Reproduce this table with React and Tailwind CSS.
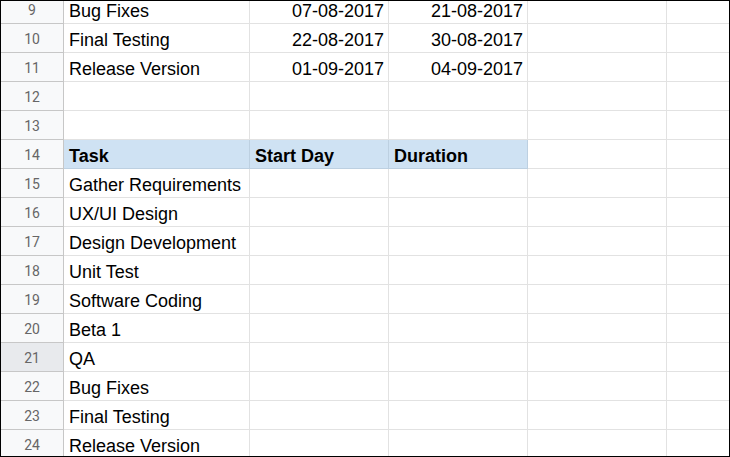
const rows = [
  { n: 9, a: 'Bug Fixes', b: '07-08-2017', c: '21-08-2017' },
  { n: 10, a: 'Final Testing', b: '22-08-2017', c: '30-08-2017' },
  { n: 11, a: 'Release Version', b: '01-09-2017', c: '04-09-2017' },
  { n: 12 },
  { n: 13 },
  { n: 14, a: 'Task', b: 'Start Day', c: 'Duration', head: true },
  { n: 15, a: 'Gather Requirements' },
  { n: 16, a: 'UX/UI Design' },
  { n: 17, a: 'Design Development' },
  { n: 18, a: 'Unit Test' },
  { n: 19, a: 'Software Coding' },
  { n: 20, a: 'Beta 1' },
  { n: 21, a: 'QA', selected: true },
  { n: 22, a: 'Bug Fixes' },
  { n: 23, a: 'Final Testing' },
  { n: 24, a: 'Release Version' },
];

function Row({ row }) {
  const cell = row.head
    ? 'bg-[#cfe2f3] border-r border-b border-[#bdd0e1] font-bold'
    : 'border-r border-b border-[#e2e2e2]';
  return (
    <div className="flex h-[29px]">
      <div
        className={`w-[63px] shrink-0 flex items-center justify-center pt-[1px] border-r border-b border-[#c7c7c7] text-[14px] text-[#666] font-['Roboto',sans-serif] ${
          row.selected ? 'bg-[#e8eaed]' : 'bg-[#f8f9fa]'
        }`}
      >
        {row.n}
      </div>
      <div className={`w-[186px] shrink-0 flex items-end pb-[1px] pl-[5px] whitespace-nowrap overflow-hidden ${cell}`}>
        {row.a}
      </div>
      <div className={`w-[139px] shrink-0 flex items-end pb-[1px] whitespace-nowrap overflow-hidden ${row.head ? 'pl-[5px]' : 'justify-end pr-[4px]'} ${cell}`}>
        {row.b}
      </div>
      <div className={`w-[139px] shrink-0 flex items-end pb-[1px] whitespace-nowrap overflow-hidden ${row.head ? 'pl-[5px]' : 'justify-end pr-[4px]'} ${cell}`}>
        {row.c}
      </div>
      <div className="w-[139px] shrink-0 border-r border-b border-[#e2e2e2]" />
      <div className="w-[62px] shrink-0 border-b border-[#e2e2e2]" />
    </div>
  );
}

export default function App() {
  return (
    <div className="w-[730px] h-[457px] border border-black overflow-hidden bg-white">
      <div className="-mt-[6px] text-[18px] leading-[22px] text-black font-['Liberation_Sans',Arial,sans-serif]">
        {rows.map((row) => (
          <Row key={row.n} row={row} />
        ))}
      </div>
    </div>
  );
}
